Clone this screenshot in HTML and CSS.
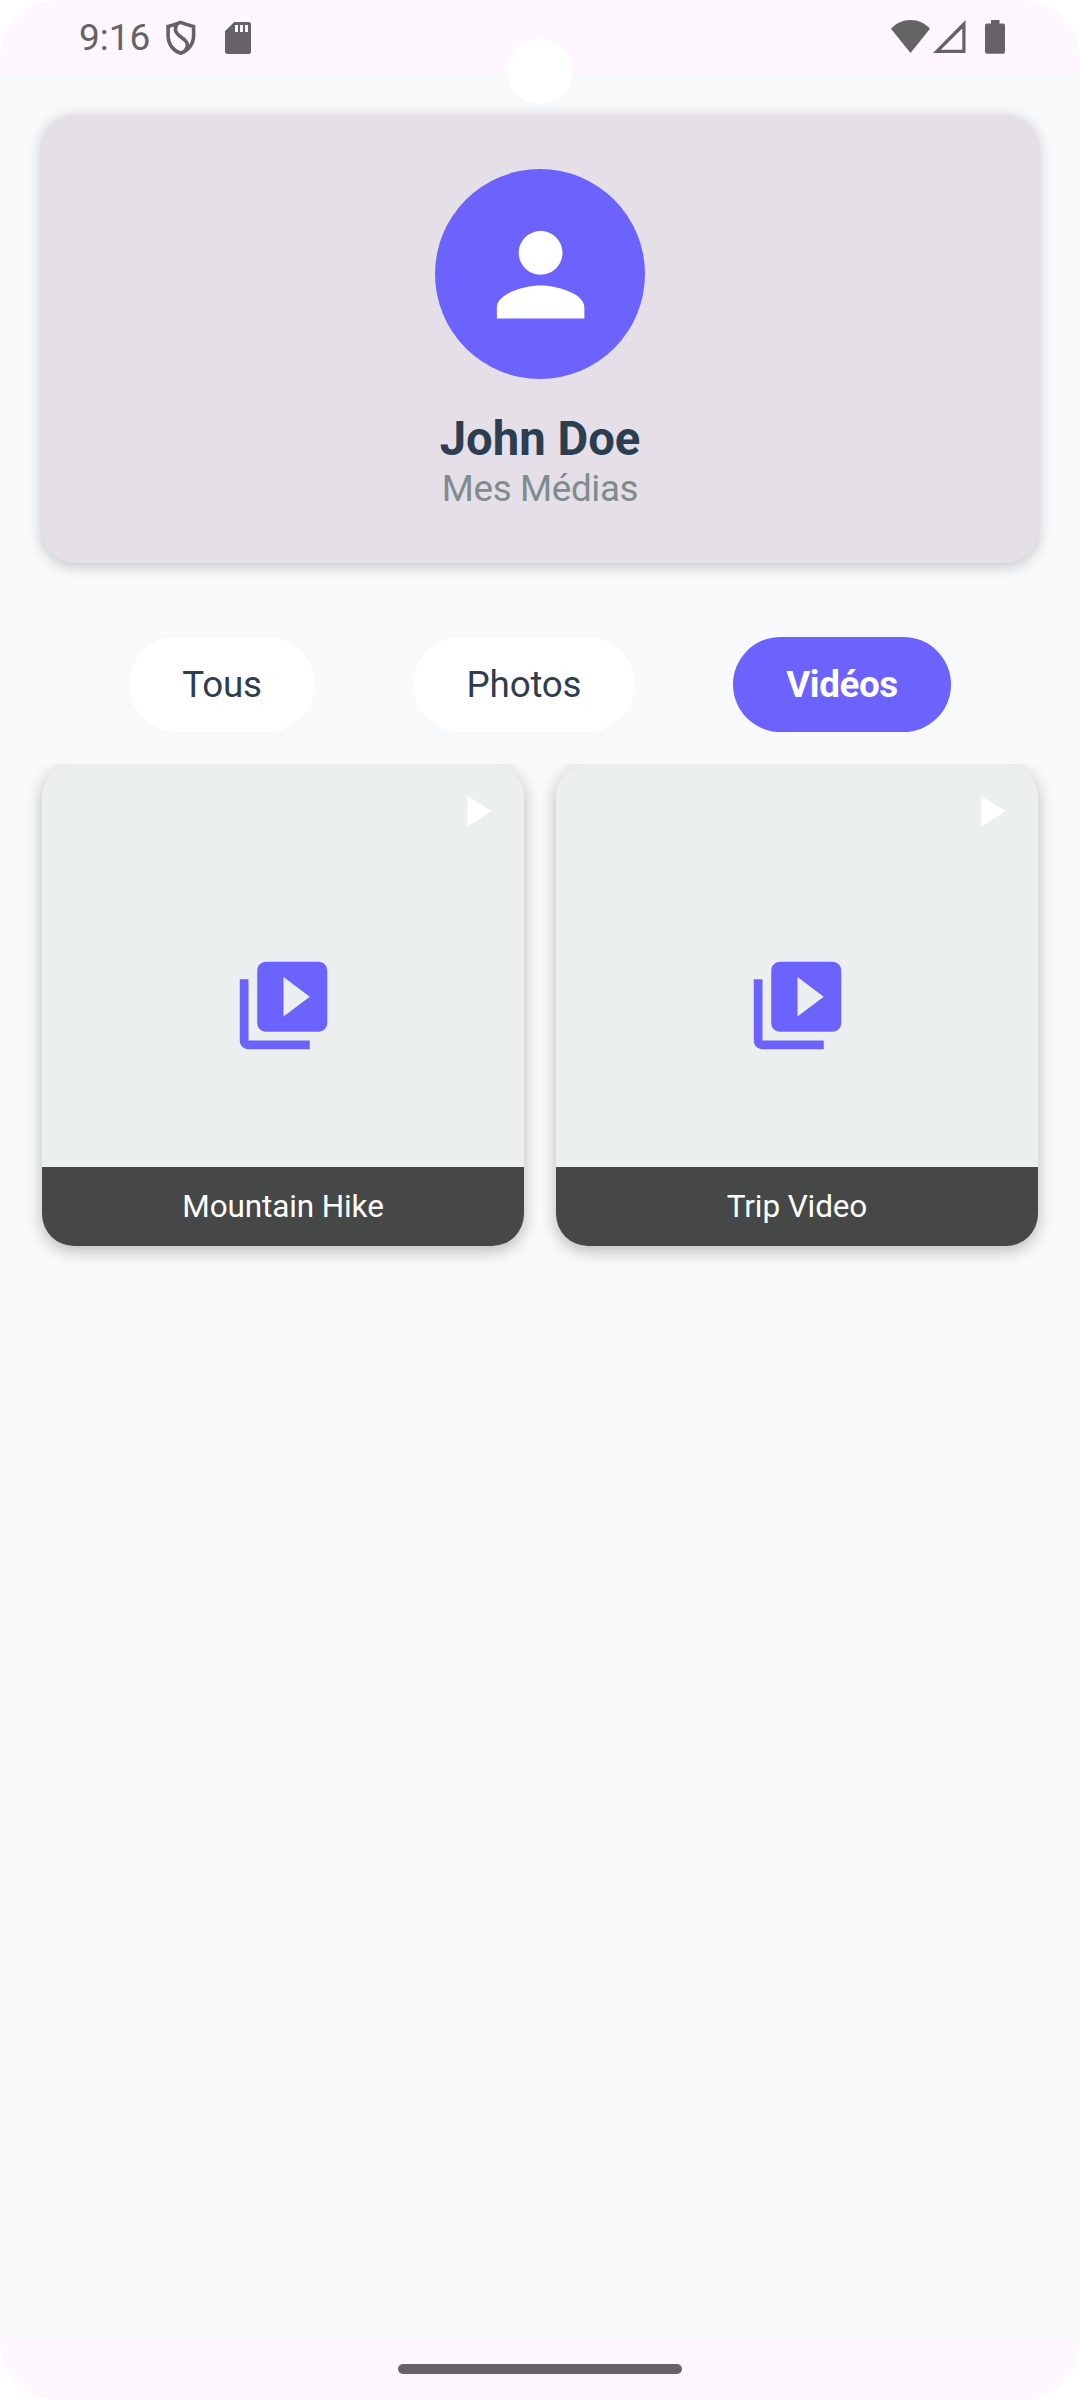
FILE: index.html
```html
<!DOCTYPE html>
<html lang="fr">
<head>
<meta charset="utf-8">
<title>Mes Médias</title>
<link rel="stylesheet" href="styles.css">
</head>
<body>
<div class="screen">
  <header class="status">
    <span class="clock">9:16</span>
    <svg class="shield" viewBox="0 0 30 36"><path d="M14.6 2.4 Q8 5 2.1 6.400 V15.5 C2.1 24.5 7.5 31 14.6 33.2 C21.8 31 27.6 24.5 27.6 15.5 V6.400 Q21 5 14.6 2.4Z"/><path d="M11.2 3.800 C8.400 8 9.200 12.200 12.600 15.200 L18.800 20 C22.200 23 22 27 19.400 30.200"/></svg>
    <svg class="sdcard" viewBox="0 0 26 32"><path fill-rule="evenodd" d="M9.3 0H23.5A2.5 2.5 0 0 1 26 2.5V29.5A2.5 2.5 0 0 1 23.5 32H2.5A2.5 2.5 0 0 1 0 29.5V9ZM10 3V10H13V3ZM15 3V10H18V3ZM20 3V10H23V3Z"/></svg>
    <span class="grow"></span>
    <svg class="wifi" viewBox="0 0 39 33"><path d="M19.5 33 0 8.7C5 3.2 12 0 19.5 0S34 3.2 39 8.7Z"/></svg>
    <svg class="signal" viewBox="0 0 33 33"><path fill-rule="evenodd" d="M0 33 32.5 0V33ZM7.8 29.8H29.3V8.4Z"/></svg>
    <svg class="battery" viewBox="0 0 20 34"><path d="M6 0H14.5V3.4H18A2 2 0 0 1 20 5.4V31.8A2 2 0 0 1 18 33.8H2A2 2 0 0 1 0 31.8V5.4A2 2 0 0 1 2 3.4H6Z"/></svg>
    <span class="camera"></span>
  </header>
  <main class="content">
    <section class="profile">
      <div class="avatar"><svg viewBox="0 0 24 24"><path d="M12 12c2.21 0 4-1.79 4-4s-1.79-4-4-4-4 1.79-4 4 1.79 4 4 4zm0 2c-2.67 0-8 1.34-8 4v2h16v-2c0-2.66-5.33-4-8-4z"/></svg></div>
      <h1 class="name">John Doe</h1>
      <p class="subtitle">Mes Médias</p>
    </section>
    <nav class="filters">
      <span class="chip chip-all">Tous</span>
      <span class="chip chip-photos">Photos</span>
      <span class="chip chip-videos active">Vidéos</span>
    </nav>
    <section class="grid">
      <article class="media">
        <svg class="library" viewBox="0 0 24 24"><path d="M4 6H2v14c0 1.100.9 2 2 2h14v-2H4V6zm16-4H8c-1.100 0-2 .9-2 2v12c0 1.100.9 2 2 2h12c1.100 0 2-.9 2-2V4c0-1.100-.9-2-2-2zm-8 12.500v-9l6 4.500-6 4.500z"/></svg>
        <svg class="play" viewBox="0 0 24 24"><path d="M8 5v14l11-7z"/></svg>
        <p class="caption">Mountain Hike</p>
      </article>
      <article class="media">
        <svg class="library" viewBox="0 0 24 24"><path d="M4 6H2v14c0 1.100.9 2 2 2h14v-2H4V6zm16-4H8c-1.100 0-2 .9-2 2v12c0 1.100.9 2 2 2h12c1.100 0 2-.9 2-2V4c0-1.100-.9-2-2-2zm-8 12.500v-9l6 4.500-6 4.500z"/></svg>
        <svg class="play" viewBox="0 0 24 24"><path d="M8 5v14l11-7z"/></svg>
        <p class="caption">Trip Video</p>
      </article>
    </section>
  </main>
  <footer class="navbar"><span class="handle"></span></footer>
</div>
</body>
</html>
```
FILE: styles.css
```css
* { box-sizing: border-box; margin: 0; }
body { background: #fff; font-family: Roboto, sans-serif; }
svg { display: block; flex: none; }
.screen {
  width: 1080px;
  height: 2400px;
  display: flex;
  flex-direction: column;
  background: #fef7ff;
  border-radius: 58px;
  overflow: hidden;
}

.status {
  position: relative;
  height: 74px;
  flex: none;
  display: flex;
  align-items: flex-start;
  padding: 20px 75px 0 79px;
  fill: #656366;
}
.clock { width: 86.5px; font-size: 37px; line-height: 36px; color: #656366; }
.shield { width: 30px; height: 36px; margin-right: 29.5px; fill: none; stroke: #656366; stroke-width: 3.6; }
.sdcard { width: 26px; height: 32px; margin-top: 2px; }
.grow { flex: 1; }
.wifi { width: 39px; height: 33px; margin-right: 3px; }
.signal { width: 33px; height: 33px; margin-right: 19px; }
.battery { width: 20px; height: 34px; }
.camera {
  position: absolute;
  left: 507px;
  top: 39px;
  width: 65px;
  height: 65px;
  border-radius: 50%;
  background: #fff;
  z-index: 1;
}

.content { flex: 1; background: #f8f9fb; padding: 41px 0 0; }
.profile {
  margin: 0 42px;
  height: 448px;
  padding-top: 54px;
  border-radius: 32px;
  background: #e5e0e8;
  box-shadow: 0 4px 14px rgba(0, 0, 0, .16), 0 0 16px rgba(0, 0, 0, .07);
  display: flex;
  flex-direction: column;
  align-items: center;
}
.avatar {
  width: 210px;
  height: 210px;
  border-radius: 50%;
  background: #6c63ff;
  display: flex;
  align-items: center;
  justify-content: center;
  padding: 1px 0 0 1px;
}
.avatar svg { width: 131.25px; height: 131.25px; fill: #fff; }
.name { margin-top: 32px; font-size: 47.25px; line-height: 56px; font-weight: 700; color: #2c3e50; }
.subtitle { font-size: 36.75px; line-height: 43px; letter-spacing: -.35px; color: #7f8c8d; }

.filters {
  display: flex;
  justify-content: space-between;
  margin-top: 74px;
  padding: 0 129px;
}
.chip {
  height: 95px;
  line-height: 95px;
  border-radius: 48px;
  background: #fff;
  color: #2c3e50;
  font-size: 36.75px;
  letter-spacing: -.2px;
  text-align: center;
}
.chip-all { width: 186px; }
.chip-photos { width: 222px; }
.chip-videos { width: 218px; }
.active { background: #6c63ff; color: #fff; font-weight: 700; letter-spacing: -.4px; }

.grid {
  display: grid;
  grid-template-columns: 482px 482px;
  gap: 32px;
  margin-top: 32px;
  padding: 0 42px 42px;
  overflow: hidden;
}
.media {
  position: relative;
  height: 482px;
  border-radius: 32px;
  background: #ebeff0;
  box-shadow: 0 6px 16px rgba(0, 0, 0, .2), 0 0 18px rgba(0, 0, 0, .07);
  display: flex;
  flex-direction: column;
  align-items: center;
}
.library { width: 105px; height: 105px; margin: 188.5px 0 109.5px; fill: #6c63ff; }
.play { position: absolute; right: 22px; top: 21px; width: 52.5px; height: 52.5px; fill: #fff; }
.caption {
  width: 100%;
  height: 79px;
  line-height: 79px;
  border-radius: 0 0 32px 32px;
  background: #464847;
  color: #fff;
  font-size: 31.5px;
  letter-spacing: -.12px;
  text-align: center;
}

.navbar { height: 63px; flex: none; display: flex; justify-content: center; padding-top: 27px; }
.handle { width: 284px; height: 10px; border-radius: 5px; background: #656366; }
```
